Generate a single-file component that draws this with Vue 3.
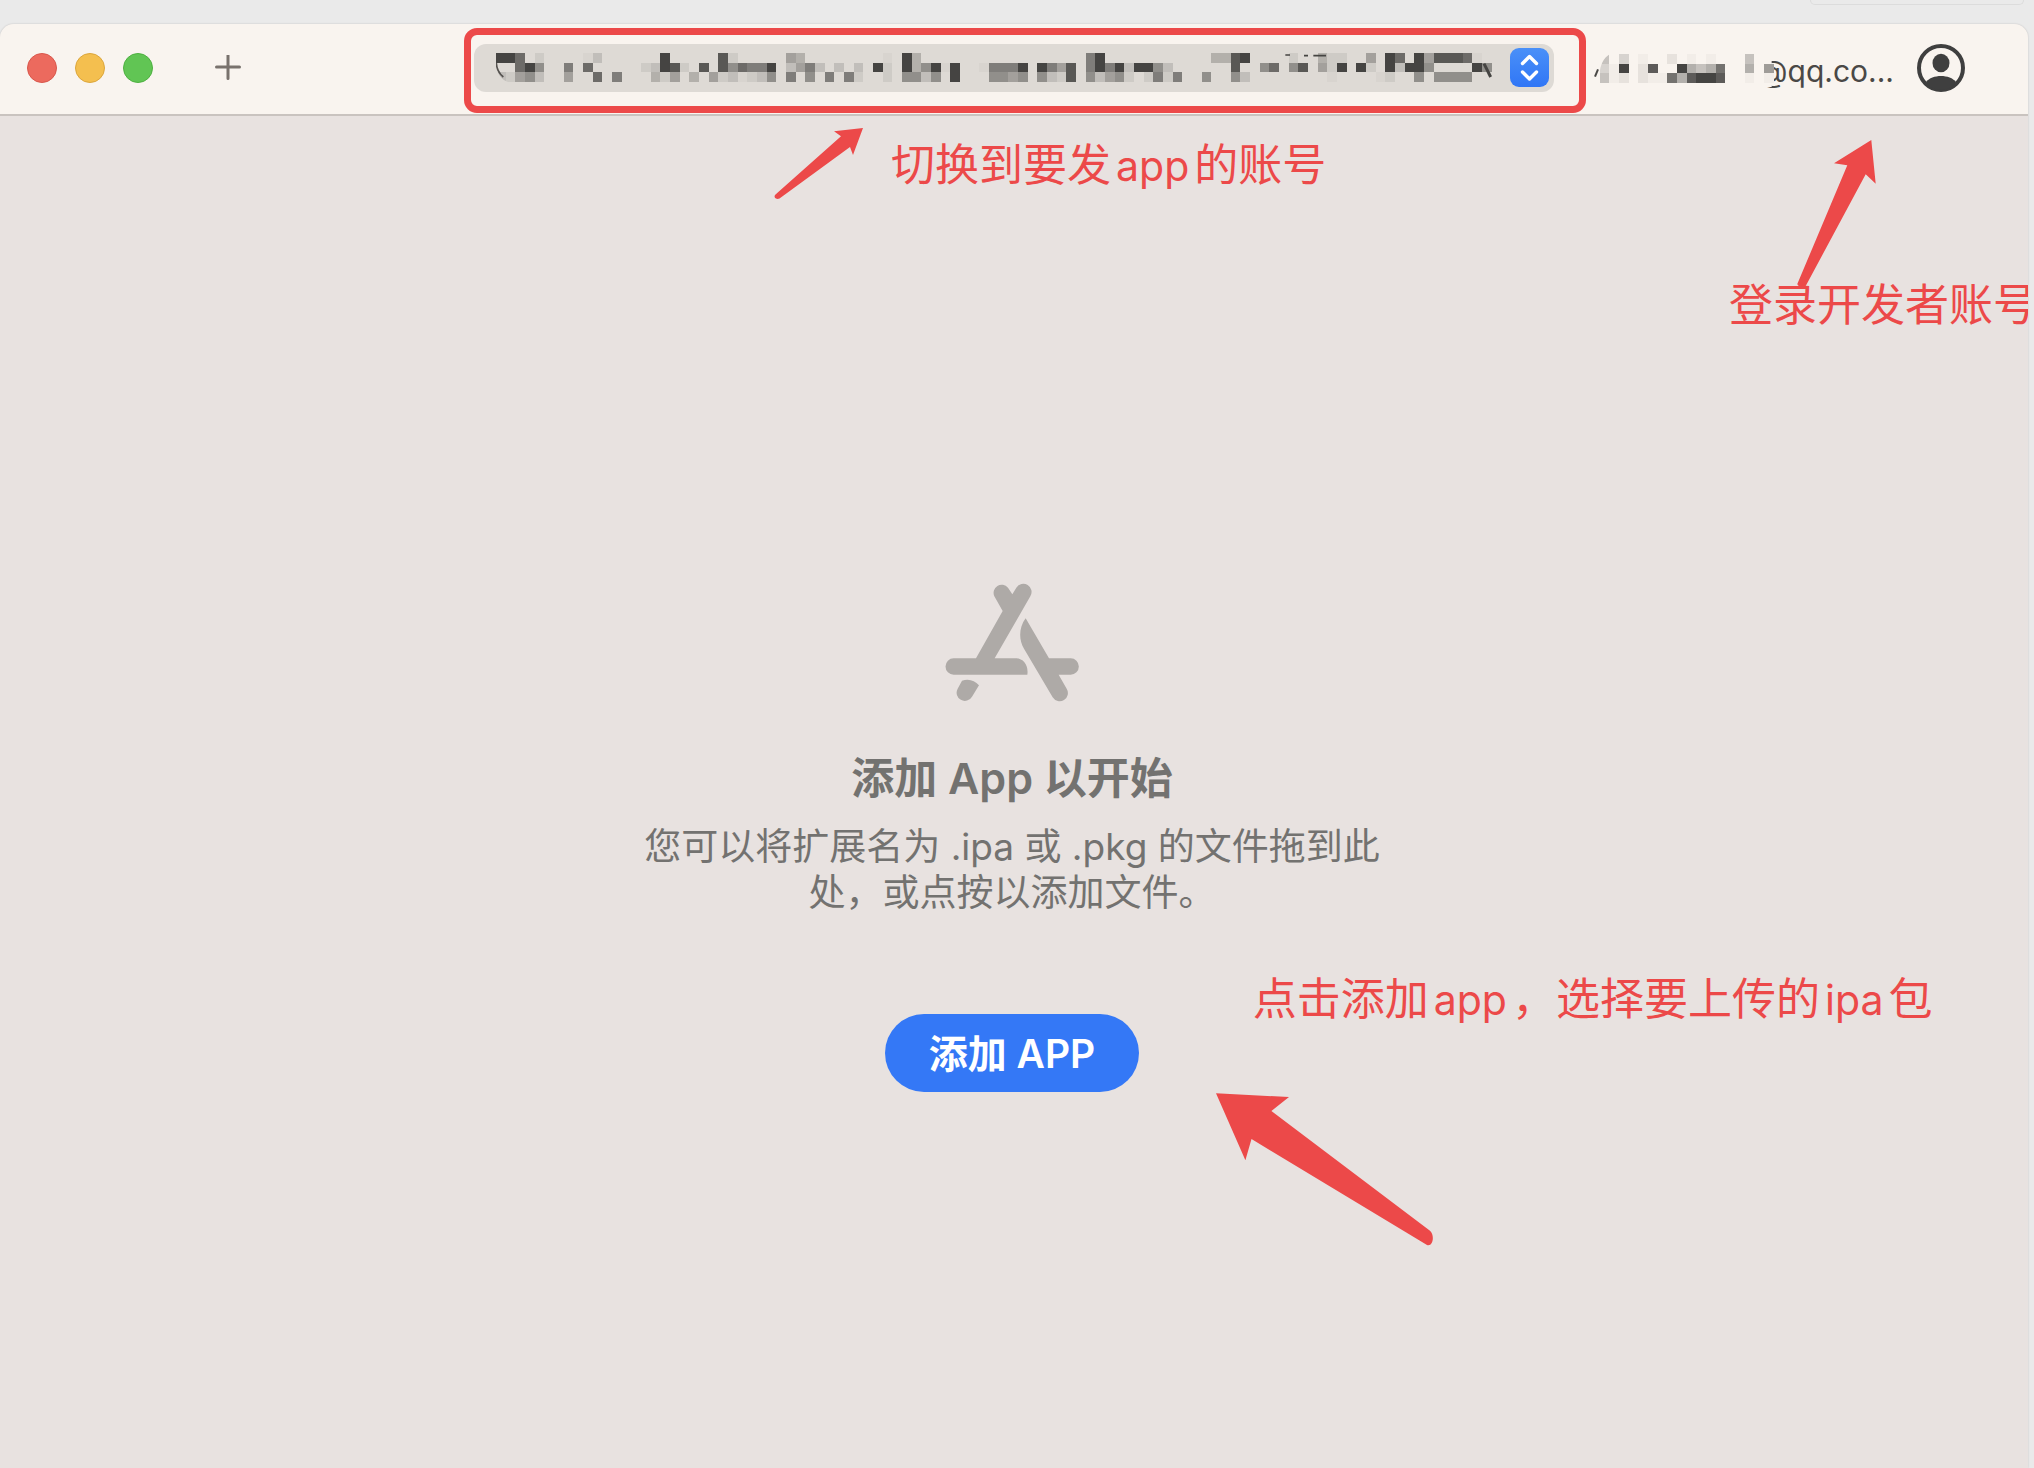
<template>
  <div class="desktop">
    <!-- Faixa da janela de trás -->
    <div class="topo">
      <div class="aba-fundo"></div>
    </div>

    <main class="janela">
      <header class="barra">
        <div class="semaforo">
          <button type="button" class="luz vermelha" aria-label="关闭"></button>
          <button type="button" class="luz amarela" aria-label="最小化"></button>
          <button type="button" class="luz verde" aria-label="缩放"></button>
        </div>

        <button type="button" class="btn-mais" aria-label="添加">
          <svg width="26" height="26" viewBox="0 0 26 26">
            <path d="M13 0.5V23.5M1.5 12H24.5" stroke="#79726d" stroke-width="3" stroke-linecap="round" />
          </svg>
        </button>

        <div class="seletor">
          <select class="seletor-campo" aria-label="账号">
            <option></option>
          </select>
          <!-- Nome da equipe ocultado por mosaico -->
          <svg class="mosaico-equipe" width="1004" height="30" viewBox="0 0 3012 90">
            <g shape-rendering="crispEdges">
              <rect
                v-for="c in celulasEquipe"
                :key="c.id"
                :x="c.x"
                :y="c.y"
                width="29"
                height="29"
                :fill="c.cor"
              />
            </g>
            <path d="M0 30C0 60 16 84 46 90H0Z" fill="#dedad5" />
            <path d="M1 30C2 48 10 62 22 72" fill="none" stroke="#55524f" stroke-width="5" />
            <path d="M2964 32L2984 72" stroke="#454442" stroke-width="9" />
            <path d="M2368 6H2382M2424 8H2436M2452 8H2490" stroke="#454442" stroke-width="5" />
          </svg>
          <svg class="seta-dupla" width="39" height="39" viewBox="0 0 39 39">
            <defs>
              <linearGradient id="azul" x1="0" y1="0" x2="0" y2="1">
                <stop offset="0" stop-color="#4a90f8" />
                <stop offset="1" stop-color="#3076f6" />
              </linearGradient>
            </defs>
            <rect width="39" height="39" rx="9" fill="url(#azul)" />
            <path
              d="M12.5 15.5L19.5 8.5L26.5 15.5M12.5 24L19.5 31L26.5 24"
              fill="none"
              stroke="#fff"
              stroke-width="3.4"
              stroke-linecap="round"
              stroke-linejoin="round"
            />
          </svg>

          <div class="destaque"></div>
          <div class="nota nota-equipe">切换到要发<span class="latim">app</span>的账号</div>
          <svg class="flecha flecha-equipe" width="96" height="76" viewBox="0 0 96 76">
            <path d="M92 3L63 6.3L70 11.3L4.5 69.5C2 72 5 75 8.5 73.5L79 22L82 30Z" />
          </svg>
        </div>

        <button type="button" class="conta">
          <span>@qq.co...</span>
          <svg class="mosaico-conta" width="184" height="33" viewBox="0 0 552 99">
            <rect x="465" y="0" width="68" height="99" fill="#f9f4ef" />
            <g transform="translate(17 0)" shape-rendering="crispEdges">
              <rect
                v-for="c in celulasConta"
                :key="c.id"
                :x="c.x"
                :y="c.y"
                width="29"
                height="29"
                :fill="c.cor"
              />
            </g>
            <path d="M15 0H48C28 12 18 34 17 60H15Z" fill="#f9f4ef" />
            <path d="M3 68L12 46" stroke="#4a4846" stroke-width="6" />
          </svg>
        </button>

        <button type="button" class="avatar" aria-label="账户">
          <svg width="48" height="48" viewBox="0 0 48 48">
            <circle cx="24" cy="24" r="22" fill="none" stroke="#3f3f3f" stroke-width="4" />
            <ellipse cx="24" cy="19" rx="8.5" ry="9.3" fill="#3f3f3f" />
            <path d="M9 38C12 34 18 32 24 32S36 34 39 38C36 43 30 46 24 46S12 43 9 38Z" fill="#3f3f3f" />
          </svg>
        </button>
      </header>

      <section class="conteudo">
        <svg class="icone-loja" width="135" height="119" viewBox="75 68 405 357">
          <path d="M168 294L248 152L223 108A24.5 24.5 0 0 1 264 82L277 102L289 82A24.5 24.5 0 0 1 331 108L224 294H288C312 295 326 316 322 343H101A24.5 24.5 0 0 1 101 294Z" />
          <path d="M317 174L387 294H452A24.5 24.5 0 0 1 452 343H416L440 385A24.5 24.5 0 0 1 398 411L312 265C296 238 296 202 317 174Z" />
          <path d="M126 361C146 354 164 360 177 375L156 409A24.5 24.5 0 0 1 113 385Z" />
        </svg>
        <h1 class="titulo">添加 App 以开始</h1>
        <p class="descricao">您可以将扩展名为 .ipa 或 .pkg 的文件拖到此处，或点按以添加文件。</p>

        <div class="acao">
          <button type="button" class="btn-adicionar">添加 APP</button>
          <div class="nota nota-app">
            点击添加<span class="latim">app</span>，选择要上传的<span class="latim">ipa</span>包
          </div>
          <svg class="flecha flecha-app" width="220" height="156" viewBox="0 0 220 156">
            <path d="M1 1.3L74 5L56.4 19L215 138.7C220 143 218 155 212 153L36.5 47L30.4 68.3Z" />
          </svg>
        </div>

        <div class="nota nota-conta">登录开发者账号</div>
        <svg class="flecha flecha-conta" width="88" height="150" viewBox="0 0 88 150">
          <path d="M81.3 2L44 25.3L57.3 27.3L7.3 146C8 149 13 150 15.7 148L75.7 36.3L85.7 45.7Z" />
        </svg>
      </section>
    </main>
  </div>
</template>

<script setup>
// Mosaico: cada grupo é uma coluna (topo, meio, base)
// '.' = vazio, de 0 (quase o fundo) a 9 (mais escuro)
const equipe = [
  '9.2 9.1 774 .95 152 ... ... .64 ... 07. 2.7 ... ..6 ... ...',
  '.1. .23 991 .84 .1. ..3 .8. ..4 881 152 .70 .61 .62 .95 ...',
  '426 34. .65 .2. ..6 .2. ..6 .21 ... .9. 011 ... 995 335 .52',
  '.95 .0. .99 ... ... .0. .65 .65 .64 .95 ... .95 .62 .41 .88',
  '... 665 992 .64 .95 .21 .9. .91 .56 .21 ..6 ... ... ..5 3..',
  '3.. 885 9.2 ... .5. .7. ... 15. .8. ... 34. 110 19. ... .9.',
  '41. ..0 991 72. .9. 995 45. 8.5 8.5 8.5 7.5 09. .5.'
].join(' ')

const conta = '323 .00 291 ... 011 .80 ..0 1.7 .94 048 .39 049 .78 ... ... 340 ... .50'

const misturar = (fundo, nivel) => {
  const t = 0.04 + 0.96 * Math.pow(Number(nivel) / 9, 1.25)
  const escuro = [69, 68, 66]
  const canais = fundo.map((v, i) => Math.round(v + (escuro[i] - v) * t))
  return `rgb(${canais.join(',')})`
}

const montarCelulas = (colunas, fundo) =>
  colunas.split(' ').flatMap((coluna, x) =>
    [...coluna]
      .map((nivel, y) => ({ id: `${x}-${y}`, x: x * 29, y: y * 29, nivel }))
      .filter((c) => c.nivel !== '.')
      .map((c) => ({ ...c, cor: misturar(fundo, c.nivel) }))
  )

const celulasEquipe = montarCelulas(equipe, [222, 218, 213])
const celulasConta = montarCelulas(conta, [249, 244, 239])
</script>

<style>
body {
  margin: 0;
  background: #eaeaea;
}
</style>

<style scoped>
.desktop {
  min-height: 100vh;
  display: flex;
  flex-direction: column;
  background: #eaeaea;
  font-family: Inter, "Noto Sans CJK SC", sans-serif;
}

button {
  border: none;
  padding: 0;
  background: none;
  font-family: inherit;
  cursor: pointer;
}

svg {
  display: block;
}

.topo {
  height: 24px;
  display: flex;
  justify-content: flex-end;
  align-items: flex-start;
  padding-right: 10px;
}

.aba-fundo {
  width: 212px;
  height: 4px;
  border: 1px solid #dcdcdc;
  border-top: none;
  border-radius: 0 0 8px 8px;
}

.janela {
  flex: 1;
  display: flex;
  flex-direction: column;
  margin-right: 6px;
  background: #e8e2e0;
  border-radius: 14px 14px 0 0;
  box-shadow: 0 0 2px rgba(0, 0, 0, 0.2);
  overflow: hidden;
}

.barra {
  box-sizing: border-box;
  height: 92px;
  display: flex;
  align-items: center;
  padding: 0 63px 2px 27px;
  background: #f9f4ef;
  border-bottom: 2px solid #c9c3bf;
}

.semaforo {
  display: flex;
  gap: 18px;
}

.luz {
  width: 30px;
  height: 30px;
  border-radius: 50%;
}

.luz.vermelha {
  background: #ec6a5e;
  border: 1px solid #d9574c;
}

.luz.amarela {
  background: #f4bf4f;
  border: 1px solid #dca63c;
}

.luz.verde {
  background: #61c554;
  border: 1px solid #4eb141;
}

.btn-mais {
  margin-left: 62px;
}

.seletor {
  position: relative;
  flex: 1;
  height: 48px;
  margin-left: 233px;
}

.seletor-campo {
  appearance: none;
  width: 100%;
  height: 100%;
  border: none;
  border-radius: 12px;
  background: #dedad5;
}

.mosaico-equipe {
  position: absolute;
  left: 22px;
  top: 9px;
  pointer-events: none;
}

.seta-dupla {
  position: absolute;
  right: 5px;
  top: 4px;
  pointer-events: none;
}

.conta {
  position: relative;
  width: 300px;
  margin-left: 40px;
  padding-top: 6px;
  font-size: 30px;
  line-height: 36px;
  text-align: right;
  color: #4a4846;
}

.mosaico-conta {
  position: absolute;
  left: 0;
  top: 7px;
}

.avatar {
  margin-left: 23px;
}

.conteudo {
  position: relative;
  flex: 1;
  display: flex;
  flex-direction: column;
  align-items: center;
  justify-content: center;
  padding: 90px 4px 0 0;
  color: #737270;
}

.icone-loja {
  fill: #aeaaa7;
}

.titulo {
  margin: 46px 0 16px;
  font-size: 43px;
  line-height: 60px;
  font-weight: 600;
}

.descricao {
  width: 740px;
  margin: 0 0 98px;
  font-size: 37px;
  line-height: 46px;
  text-align: center;
}

.acao {
  position: relative;
}

.btn-adicionar {
  height: 78px;
  padding: 0 44px 4px;
  border-radius: 39px;
  background: #3478f6;
  color: #fff;
  font-size: 39px;
  font-weight: 600;
}

/* Anotações em vermelho sobre a janela */
.destaque {
  position: absolute;
  inset: -16px -32px -21px -10px;
  border: 7px solid #ec4949;
  border-radius: 13px;
  pointer-events: none;
}

.nota {
  position: absolute;
  color: #ec4949;
  font-family: "Noto Sans CJK SC", sans-serif;
  font-size: 44px;
  line-height: 44px;
  white-space: nowrap;
}

.latim {
  margin: 0 5px;
  font-family: Inter, sans-serif;
  font-size: 41px;
}

.nota-equipe {
  left: 417px;
  top: 96px;
}

.nota-app {
  left: 368px;
  top: -40px;
}

.nota-conta {
  right: -9px;
  top: 164px;
}

.flecha {
  position: absolute;
  fill: #ec4949;
  pointer-events: none;
}

.flecha-equipe {
  left: 297px;
  top: 81px;
}

.flecha-app {
  left: 330px;
  top: 78px;
}

.flecha-conta {
  right: 150px;
  top: 22px;
}
</style>
